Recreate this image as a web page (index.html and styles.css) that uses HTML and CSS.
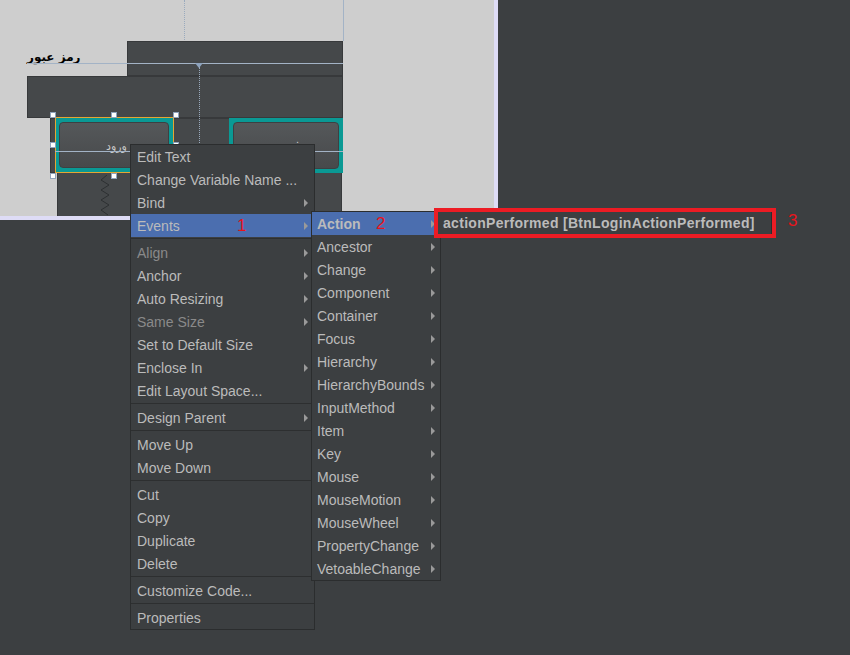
FILE: index.html
```html
<!DOCTYPE html>
<html>
<head>
<meta charset="utf-8">
<link rel="stylesheet" href="styles.css">
</head>
<body>
<div class="canvas">
  <div class="guide-v right-guide"></div>
  <div class="dot-v dot-top"></div>
  <div class="box box1"></div>
  <div class="box box2"></div>
  <div class="box box3"></div>
  <div class="box box4"></div>
  <div class="label-ar">رمز عبور</div>
  <div class="guide-h gh1"></div>
  <div class="marker"></div>
  <div class="dot-v dot-mid"></div>
  <div class="btn btn1"><div class="btn-in"><span class="btn-text">ورود</span></div></div>
  <div class="btn btn2"><div class="btn-in"><span class="btn-text2">.</span></div></div>
  <div class="sel"></div>
  <div class="guide-h gh2"></div>
  <span class="handle h1"></span>
  <span class="handle h2"></span>
  <span class="handle h3"></span>
  <span class="handle h4"></span>
  <span class="handle h5"></span>
  <span class="handle h6"></span>
  <span class="handle h7"></span>
  <svg class="spring" width="12" height="42" viewBox="0 0 12 42"><polyline points="8,0 2,5 10,10 2,15 10,20 2,25 10,30 2,35 9,40" fill="none" stroke="#2d3032" stroke-width="1"/></svg>
</div>

<ul class="menu main-menu">
  <li>Edit Text</li>
  <li>Change Variable Name ...</li>
  <li class="sub">Bind</li>
  <li class="sub active">Events<span class="num n1">1</span></li>
  <li class="sep"></li>
  <li class="sub disabled">Align</li>
  <li class="sub">Anchor</li>
  <li class="sub">Auto Resizing</li>
  <li class="sub disabled">Same Size</li>
  <li>Set to Default Size</li>
  <li class="sub">Enclose In</li>
  <li>Edit Layout Space...</li>
  <li class="sep"></li>
  <li class="sub">Design Parent</li>
  <li class="sep"></li>
  <li>Move Up</li>
  <li>Move Down</li>
  <li class="sep"></li>
  <li>Cut</li>
  <li>Copy</li>
  <li>Duplicate</li>
  <li>Delete</li>
  <li class="sep"></li>
  <li>Customize Code...</li>
  <li class="sep"></li>
  <li>Properties</li>
</ul>

<ul class="menu events-menu">
  <li class="sub active bold">Action<span class="num n2">2</span></li>
  <li class="sub">Ancestor</li>
  <li class="sub">Change</li>
  <li class="sub">Component</li>
  <li class="sub">Container</li>
  <li class="sub">Focus</li>
  <li class="sub">Hierarchy</li>
  <li class="sub">HierarchyBounds</li>
  <li class="sub">InputMethod</li>
  <li class="sub">Item</li>
  <li class="sub">Key</li>
  <li class="sub">Mouse</li>
  <li class="sub">MouseMotion</li>
  <li class="sub">MouseWheel</li>
  <li class="sub">PropertyChange</li>
  <li class="sub">VetoableChange</li>
</ul>

<div class="red-box">
  <ul class="menu action-menu">
    <li class="bold">actionPerformed [BtnLoginActionPerformed]</li>
  </ul>
</div>
<span class="num n3">3</span>
</body>
</html>
```

FILE: styles.css
```css
html, body {
  margin: 0;
  padding: 0;
}
body {
  width: 850px;
  height: 655px;
  background: #3c3f41;
  position: relative;
  overflow: hidden;
  font-family: "Liberation Sans", Arial, sans-serif;
}

.canvas {
  position: absolute;
  left: 0;
  top: 0;
  width: 494px;
  height: 216px;
  background: #cecece;
  border-right: 4px solid #dedcf6;
  border-bottom: 4px solid #dedcf6;
}

.box {
  position: absolute;
  background: #45484a;
  border: 1px solid #37393b;
  box-sizing: border-box;
}
.box1 { left: 127px; top: 41px; width: 216px; height: 35px; }
.box2 { left: 27px; top: 76px; width: 316px; height: 42px; }
.box3 { left: 50px; top: 118px; width: 293px; height: 55px; }
.box4 { left: 57px; top: 172px; width: 285px; height: 44px; border-bottom: none; }

.guide-v {
  position: absolute;
  width: 1px;
  background: #a3b3c6;
}
.right-guide { left: 343px; top: 0; height: 41px; }

.dot-v {
  position: absolute;
  width: 0;
  border-left: 1px dotted #9aaabd;
}
.dot-top { left: 184px; top: 0; height: 62px; }
.dot-mid { left: 199px; top: 67px; height: 80px; }

.guide-h {
  position: absolute;
  height: 1px;
  background: #a3b3c6;
}
.gh1 { left: 27px; top: 63px; width: 316px; }
.gh2 { left: 55px; top: 151px; width: 288px; }

.marker {
  position: absolute;
  left: 195px;
  top: 63px;
  width: 0;
  height: 0;
  border-left: 4px solid transparent;
  border-right: 4px solid transparent;
  border-top: 5px solid #8ea3bd;
}

.label-ar {
  position: absolute;
  left: 27px;
  top: 50px;
  font-family: "DejaVu Sans", sans-serif;
  font-size: 12px;
  font-weight: bold;
  color: #000;
  direction: rtl;
  line-height: 14px;
  white-space: nowrap;
}

.btn {
  position: absolute;
  background: #0a9994;
  padding: 4px;
  box-sizing: border-box;
}
.btn1 { left: 55px; top: 118px; width: 118px; height: 54px; }
.btn2 { left: 229px; top: 118px; width: 114px; height: 55px; }
.btn-in {
  width: 100%;
  height: 100%;
  box-sizing: border-box;
  border: 1px solid #3d4042;
  border-radius: 4px;
  background: linear-gradient(#55585a, #47494b);
  position: relative;
}
.btn-text {
  position: absolute;
  left: 46px;
  top: 17px;
  font-family: "DejaVu Sans", sans-serif;
  font-size: 11px;
  color: #c8c8c8;
  direction: rtl;
}
.btn-text2 {
  position: absolute;
  left: 62px;
  top: 10px;
  font-size: 11px;
  color: #c8c8c8;
}

.sel {
  position: absolute;
  left: 55px;
  top: 117px;
  width: 119px;
  height: 56px;
  box-sizing: border-box;
  border: 1px solid #e6a632;
}

.handle {
  position: absolute;
  width: 6px;
  height: 6px;
  box-sizing: border-box;
  background: #fff;
  border: 1px solid #8fa3bb;
}
.h1 { left: 50px; top: 112px; }
.h2 { left: 111px; top: 112px; }
.h3 { left: 173px; top: 112px; }
.h4 { left: 50px; top: 142px; }
.h5 { left: 50px; top: 173px; }
.h6 { left: 111px; top: 173px; }
.h7 { left: 173px; top: 142px; }

.spring {
  position: absolute;
  left: 99px;
  top: 175px;
}

/* menus */
.menu {
  list-style: none;
  margin: 0;
  padding: 0;
  background: #3c3f41;
  border: 1px solid #2b2d2e;
  position: absolute;
  font-size: 14px;
  color: #bbbbbb;
}
.menu li {
  height: 23px;
  line-height: 24px;
  padding-left: 6px;
  position: relative;
  white-space: nowrap;
}
.menu li.sep {
  height: 4px;
  padding: 0;
  position: relative;
}
.menu li.sep::before {
  content: "";
  position: absolute;
  left: 0;
  right: 0;
  top: 1px;
  height: 1px;
  background: #2d2f30;
}
.menu li.active {
  background: #4b6eaf;
}
.menu li.disabled {
  color: #8a8a8a;
}
.menu li.bold {
  font-weight: bold;
}
.menu li.sub::after {
  content: "";
  position: absolute;
  right: 6px;
  top: 8px;
  width: 0;
  height: 0;
  border-left: 4px solid #9a9a9a;
  border-top: 4px solid transparent;
  border-bottom: 4px solid transparent;
}

.main-menu {
  left: 130px;
  top: 144px;
  width: 183px;
}
.events-menu {
  left: 311px;
  top: 211px;
  width: 128px;
}
.events-menu li {
  padding-left: 5px;
}
.events-menu li.sub::after {
  right: 5px;
}

.red-box {
  position: absolute;
  left: 434px;
  top: 208px;
  width: 334px;
  height: 22px;
  border: 4px solid #ec1c24;
}
.action-menu {
  position: static;
  border: none;
  border-right: 1px solid #2b2d2e;
  height: 22px;
  width: 333px;
}
.action-menu li {
  height: 22px;
  line-height: 23px;
  padding-left: 5px;
  letter-spacing: 0.3px;
}

.num {
  position: absolute;
  color: #e8141c;
  font-size: 17px;
  font-weight: normal;
  line-height: 23px;
  letter-spacing: 0;
  top: 0;
}
.n1 { left: 106px; }
.n2 { left: 64px; }
.n3 {
  left: 788px;
  top: 208px;
  line-height: 26px;
}
```
